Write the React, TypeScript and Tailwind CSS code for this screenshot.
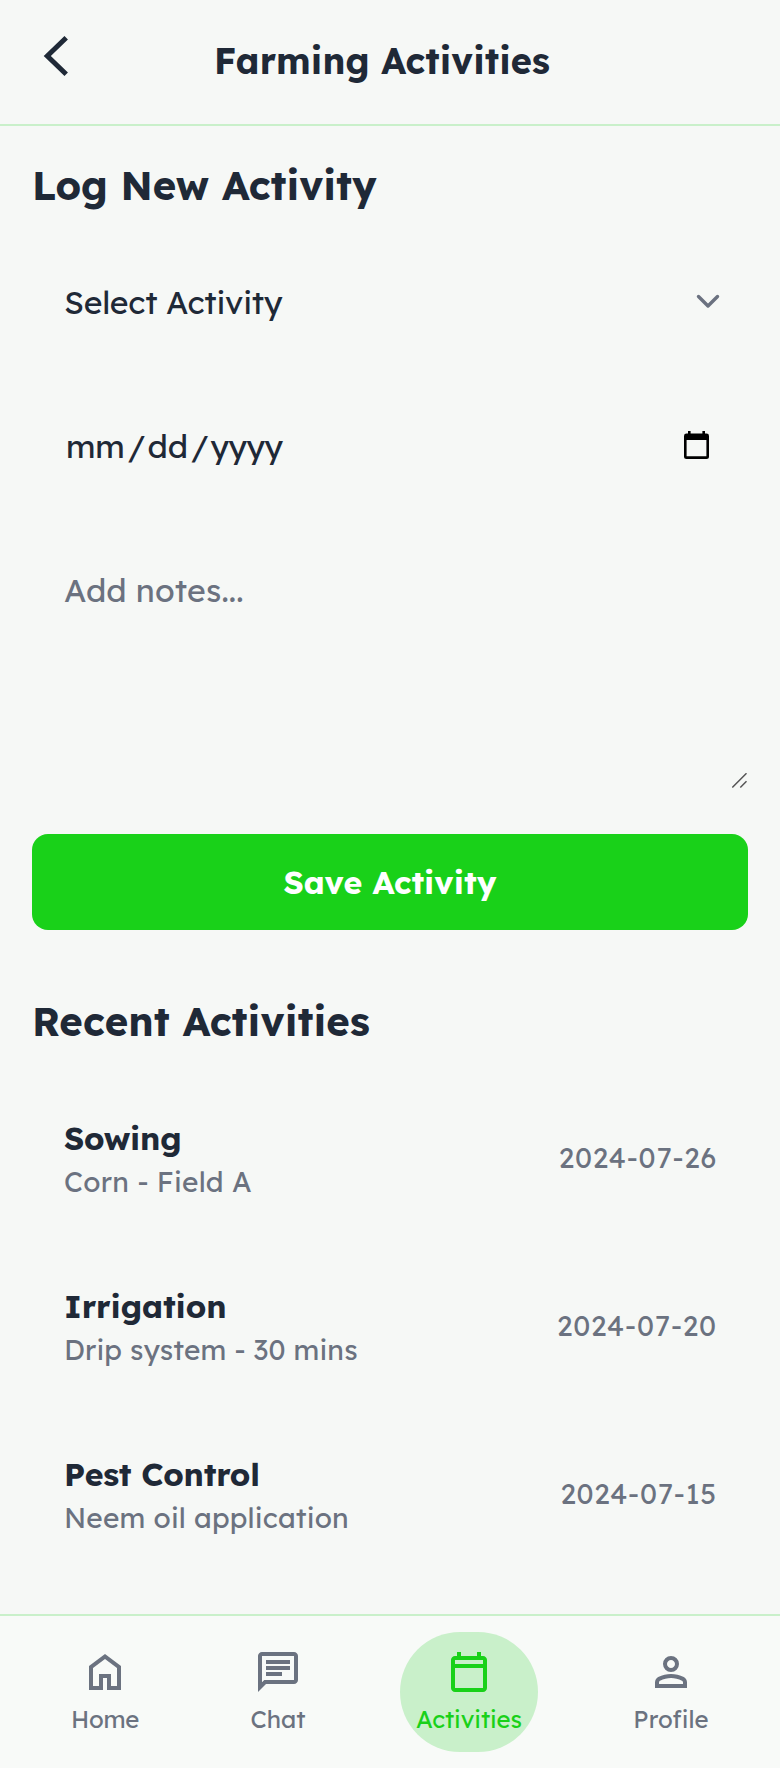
import type { ReactNode } from "react";

const activities = [
  { name: "Sowing", nameClass: "tracking-[-0.25px]", detail: "Corn - Field A", detailClass: "tracking-[0.28px]", date: "2024-07-26", dateClass: "-mr-px tracking-[0.85px]" },
  { name: "Irrigation", nameClass: "tracking-[-0.1px]", detail: "Drip system - 30 mins", detailClass: "tracking-[0.12px]", date: "2024-07-20", dateClass: "-mr-px tracking-[0.9px]" },
  { name: "Pest Control", nameClass: "tracking-[-0.22px]", detail: "Neem oil application", detailClass: "tracking-[0.17px]", date: "2024-07-15", dateClass: "-mr-px tracking-[0.8px]" },
];

function NavItem({ label, className, labelClass, children }: { label: string; className: string; labelClass: string; children: ReactNode }) {
  return (
    <a className={"flex h-[120px] shrink-0 flex-col items-center rounded-full pt-4 " + className}>
      <svg viewBox="0 0 24 24" className="size-12 shrink-0" fill="currentColor" fillRule="evenodd">{children}</svg>
      <span className={"mt-[7px] h-8 whitespace-nowrap text-2xl leading-8 " + labelClass}>{label}</span>
    </a>
  );
}

export default function App() {
  return (
    <div className="flex h-[1768px] w-[780px] flex-col overflow-hidden bg-[#f6f8f6] font-['Lexend','Inter',sans-serif] text-[#1f2937]">
      <header className="flex h-[126px] shrink-0 items-start border-b-2 border-[#c9f0ca] pl-8">
        <button className="mt-8 size-12">
          <svg viewBox="0 0 24 24" className="size-12" fill="none" stroke="currentColor" strokeWidth="2.5">
            <path d="M17.1 2.850 7.650 12l9.450 9.150" />
          </svg>
        </button>
        <h1 className="ml-[134px] mt-[41px] whitespace-nowrap text-[36px] font-bold leading-10 tracking-[0.1px]">Farming Activities</h1>
      </header>

      <main className="flex flex-1 flex-col px-8">
        <h2 className="mt-[35px] h-12 whitespace-nowrap text-[40px] font-bold leading-[48px] tracking-[-0.04px]">Log New Activity</h2>
        <div className="mt-[38px] flex h-28 shrink-0 items-center justify-between pb-0.5 pl-8 pr-7">
          <span className="whitespace-nowrap text-[32px] leading-10 tracking-[-0.23px]">Select Activity</span>
          <svg viewBox="0 0 24 16" className="h-4 w-6" fill="none" stroke="#6b7280" strokeWidth="3.400" strokeLinecap="round" strokeLinejoin="round">
            <path d="m2.500 2.500 9.500 9.500 9.500-9.500" />
          </svg>
        </div>
        <div className="mt-8 flex h-28 shrink-0 items-center justify-between pb-0.5 pl-[34px] pr-[39px]">
          <span className="whitespace-nowrap text-[32px] leading-10 tracking-[-0.1px]">mm<span className="ml-[3px] mr-0.5">/</span>dd<span className="ml-[3px] mr-0.5">/</span><span className="tracking-[-0.6px]">yyyy</span></span>
          <svg viewBox="0 0 25 28" className="mb-[3px] h-7 w-[25px]" fill="#000" fillRule="evenodd">
            <path d="M4 0h2.600v2.600h11.800V0H21v2.600h1.500Q25 2.600 25 5v20.500Q25 28 22.500 28h-20Q0 28 0 25.500V5q0-2.400 2.500-2.400H4ZM2.600 9v16.200h19.800V9Z" />
          </svg>
        </div>
        <div className="mt-8 flex h-64 shrink-0 items-start justify-between pl-8">
          <span className="mt-[35px] whitespace-nowrap text-[32px] leading-10 tracking-[0.13px] text-[#6b7280]">Add notes...</span>
          <svg viewBox="0 0 16 16" className="mt-[238px] size-4 shrink-0" fill="none" stroke="#555" strokeWidth="1.500">
            <path d="M.300 14.500 14.500.300M8.300 14.500l6.200-6.200" />
          </svg>
        </div>
        <button className="mt-[43px] h-24 shrink-0 rounded-2xl bg-[#19d119] text-[32px] font-bold leading-10 text-white">Save Activity</button>
        <h2 className="mt-[67px] h-12 shrink-0 whitespace-nowrap text-[40px] font-bold leading-[48px] tracking-[0.08px]">Recent Activities</h2>
        <ul className="mt-[45px] flex flex-col gap-8">
          {activities.map((a) => (
            <li key={a.name} className="flex h-[136px] items-center justify-between px-8">
              <div>
                <p className={"h-12 whitespace-nowrap text-[32px] font-bold leading-[48px] " + a.nameClass}>{a.name}</p>
                <p className={"h-10 whitespace-nowrap text-[28px] leading-10 text-[#6b7280] " + a.detailClass}>{a.detail}</p>
              </div>
              <span className={"whitespace-nowrap text-[28px] leading-10 text-[#6b7280] " + a.dateClass}>{a.date}</span>
            </li>
          ))}
        </ul>
      </main>

      <nav className="flex h-[154px] shrink-0 items-start border-t-2 border-[#c9f0ca] bg-[#f8faf8] pt-4 text-[#6b7280]">
        <NavItem label="Home" className="ml-[55px] w-[100px]" labelClass="tracking-[-0.25px]">
          <path d="M4 21V9l8-6 8 6v12h-7v-6h-2v6Zm2-2h3v-6h6v6h3v-9l-6-4.500L6 10Z" />
        </NavItem>
        <NavItem label="Chat" className="ml-[73px] w-[100px]" labelClass="tracking-normal">
          <path d="M2 22V4q0-.825.588-1.413T4 2h16q.825 0 1.413.588T22 4v12q0 .825-.588 1.413T20 18H6Zm3.150-6H20V4H4v13.125ZM6 14h8v-2H6Zm0-3h12V9H6Zm0-3h12V6H6Z" />
        </NavItem>
        <NavItem label="Activities" className="ml-[72px] w-[138px] bg-[#c9f0ca] text-[#19d119]" labelClass="tracking-[-0.1px]">
          <path d="M5 22q-.825 0-1.413-.588T3 20V6q0-.825.588-1.413T5 4h1V2h2v2h8V2h2v2h1q.825 0 1.413.588T21 6v14q0 .825-.588 1.413T19 22Zm0-2h14V10H5Zm0-12h14V6H5Z" />
        </NavItem>
        <NavItem label="Profile" className="ml-[83px] w-[100px]" labelClass="tracking-[0.1px]">
          <path d="M12 12q-1.650 0-2.825-1.175T8 8q0-1.650 1.175-2.825T12 4q1.650 0 2.825 1.175T16 8q0 1.650-1.175 2.825T12 12Zm-8 8v-2.800q0-.850.438-1.563T5.600 14.550q1.550-.775 3.150-1.163T12 13q1.650 0 3.250.388t3.150 1.162q.725.375 1.163 1.088T20 17.200V20Zm2-2h12v-.800q0-.275-.137-.5t-.363-.350q-1.350-.675-2.725-1.013T12 15q-1.400 0-2.775.337T6.500 16.350q-.225.125-.363.350T6 17.200Zm6-8q.825 0 1.413-.588T14 8q0-.825-.588-1.413T12 6q-.825 0-1.413.588T10 8q0 .825.588 1.413T12 10Z" />
        </NavItem>
      </nav>
    </div>
  );
}
